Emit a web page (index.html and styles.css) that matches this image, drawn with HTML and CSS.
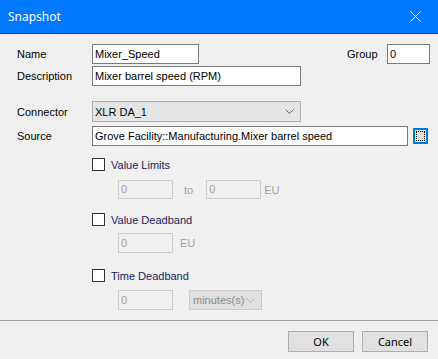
FILE: index.html
```html
<!DOCTYPE html>
<html>
<head>
<meta charset="utf-8">
<link rel="stylesheet" href="styles.css">
</head>
<body>
<div class="dialog">
  <div class="titlebar">
    <span class="title">Snapshot</span>
    <svg class="close" width="11" height="11" viewBox="0 0 11 11"><path d="M0.5 0.5 L10.5 10.5 M10.5 0.5 L0.5 10.5" stroke="#fff" stroke-width="1" fill="none"/></svg>
  </div>
  <div class="content">
    <div class="row r-name">
      <label class="lbl">Name</label>
      <div class="field w-name">Mixer_Speed</div>
      <label class="lbl-group">Group</label>
      <div class="field w-group">0</div>
    </div>
    <div class="row r-desc">
      <label class="lbl">Description</label>
      <div class="field w-desc">Mixer barrel speed (RPM)</div>
    </div>
    <div class="row r-conn">
      <label class="lbl">Connector</label>
      <div class="combo w-desc"><span>XLR DA_1</span>
        <svg width="9" height="5" viewBox="0 0 9 5"><path d="M0.5 0.5 L4.5 4.5 L8.5 0.5" stroke="#606060" fill="none"/></svg>
      </div>
    </div>
    <div class="row r-src">
      <label class="lbl">Source</label>
      <div class="field w-src">Grove Facility::Manufacturing.Mixer barrel speed</div>
      <div class="browse"><div class="focus"></div></div>
    </div>

    <div class="opts">
      <div class="check c-limits"><span class="box"></span><span class="ctext">Value Limits</span></div>
      <div class="sub s-limits">
        <div class="field dis w-small">0</div>
        <span class="dtext to">to</span>
        <div class="field dis w-small">0</div>
        <span class="dtext eu">EU</span>
      </div>
      <div class="check c-dead"><span class="box"></span><span class="ctext">Value Deadband</span></div>
      <div class="sub s-dead">
        <div class="field dis w-small">0</div>
        <span class="dtext eu2">EU</span>
      </div>
      <div class="check c-time"><span class="box"></span><span class="ctext">Time Deadband</span></div>
      <div class="sub s-time">
        <div class="field dis w-small">0</div>
        <div class="combo dcombo"><span>minutes(s)</span>
          <svg width="9" height="5" viewBox="0 0 9 5"><path d="M0.5 0.5 L4.5 4.5 L8.5 0.5" stroke="#b4b4b4" fill="none"/></svg>
        </div>
      </div>
    </div>
  </div>
  <div class="footer">
    <div class="btn">OK</div>
    <div class="btn">Cancel</div>
  </div>
</div>
</body>
</html>
```

FILE: styles.css
```css
html, body {
  margin: 0;
  padding: 0;
}
body {
  width: 438px;
  height: 359px;
  background: #f0f0f0;
  font-family: "Liberation Sans", Arial, sans-serif;
  font-size: 11px;
  color: #000;
  overflow: hidden;
}
.dialog {
  width: 438px;
  height: 359px;
  display: flex;
  flex-direction: column;
}
.titlebar {
  height: 33px;
  background: #0179fe;
  border-bottom: 1px solid #3a3a3a;
  display: flex;
  align-items: center;
  justify-content: space-between;
  padding: 0 17px 0 8px;
  flex: none;
}
.title {
  font-family: "Noto Sans", "Open Sans", sans-serif;
  font-size: 12px;
  color: #fff;
  margin-top: -1px;
}
.close {
  display: block;
  margin-top: -1px;
}
.content {
  padding-left: 17px;
  flex: 1;
}
.row {
  display: flex;
  align-items: center;
}
.lbl {
  width: 75px;
  flex: none;
}
.field {
  height: 20px;
  box-sizing: border-box;
  border: 1px solid #7a7a7a;
  background: #fff;
  padding: 0 2px;
  line-height: 18px;
  white-space: nowrap;
  overflow: hidden;
  flex: none;
}
.r-name { margin-top: 10px; }
.w-name { width: 107px; }
.lbl-group { margin-left: 148px; width: 40px; }
.w-group { width: 43px; }
.r-desc { margin-top: 2px; }
.w-desc { width: 209px; }
.r-conn { margin-top: 15px; }
.combo {
  height: 21px;
  box-sizing: border-box;
  border: 1px solid #adadad;
  background: #e5e5e5;
  display: flex;
  align-items: center;
  justify-content: space-between;
  padding: 0 6px 0 2px;
  flex: none;
}
.combo svg { display: block; }
.r-src { margin-top: 4px; }
.w-src { width: 316px; }
.browse {
  margin-left: 5px;
  width: 15px;
  height: 16px;
  box-sizing: border-box;
  border: 2px solid #0078d7;
  background: #e1e1e1;
  padding: 1px;
}
.focus {
  width: 100%;
  height: 100%;
  box-sizing: border-box;
  border: 1px dotted #000;
}
.opts {
  padding-left: 75px;
}
.check {
  display: flex;
  align-items: center;
  height: 13px;
}
.box {
  width: 13px;
  height: 13px;
  box-sizing: border-box;
  border: 1px solid #333;
  background: #fff;
  flex: none;
}
.ctext {
  margin-left: 6px;
  color: #202060;
}
.c-limits { margin-top: 12px; }
.sub {
  display: flex;
  align-items: center;
  padding-left: 26px;
}
.s-limits { margin-top: 9px; }
.w-small { width: 55px; }
.dis {
  border-color: #cccccc;
  background: #f0f0f0;
  color: #a0a0a0;
  height: 19px;
  line-height: 17px;
}
.dtext { color: #a0a0a0; }
.to { margin-left: 11px; margin-right: 13px; }
.eu { margin-left: 3px; }
.c-dead { margin-top: 14px; }
.s-dead { margin-top: 7px; }
.s-dead .dis { height: 20px; line-height: 18px; }
.eu2 { margin-left: 7px; }
.c-time { margin-top: 16px; }
.s-time { margin-top: 8px; }
.s-time .dis { height: 20px; line-height: 18px; }
.dcombo {
  margin-left: 16px;
  width: 73px;
  height: 20px;
  background: #e0e0e0;
  border-color: #cccccc;
  color: #8a8a8a;
  padding: 0 6px 0 3px;
}
.footer {
  flex: none;
  border-top: 1px solid #a0a0a0;
  height: 39px;
  box-sizing: border-box;
  display: flex;
  justify-content: flex-end;
  align-items: flex-start;
  gap: 8px;
  padding: 10px 10px 0 0;
}
.btn {
  width: 66px;
  height: 21px;
  box-sizing: border-box;
  border: 1px solid #adadad;
  background: #e1e1e1;
  font-family: "Noto Sans", "Open Sans", sans-serif;
  font-size: 11px;
  display: flex;
  align-items: center;
  justify-content: center;
}
```
